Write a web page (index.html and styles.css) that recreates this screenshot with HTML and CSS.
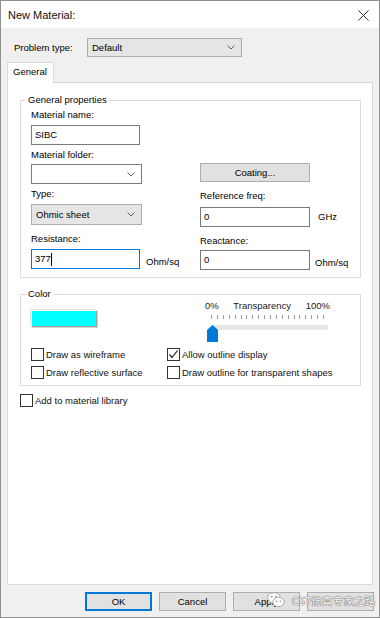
FILE: index.html
```html
<!DOCTYPE html>
<html lang="en">
<head>
  <meta charset="UTF-8">
  <meta name="viewport" content="width=device-width, initial-scale=1.0">
  <title>New Material</title>
  <link rel="stylesheet" href="styles.css">
</head>
<body>
  <div class="window">
    <div class="titlebar">
      <span class="title">New Material:</span>
      <svg class="close" width="11" height="11" viewBox="0 0 11 11"><path d="M0.5 0.5 L10.5 10.5 M10.5 0.5 L0.5 10.5" stroke="#2b2b2b" stroke-width="1"/></svg>
    </div>
    <div class="content">
      <div class="problem-row">
        <span class="problem-label">Problem type:</span>
        <div class="combo combo-list problem-select">
          <span>Default</span>
          <svg class="chev" width="8" height="5" viewBox="0 0 8 5"><path d="M0.5 0.5 L4 4 L7.5 0.5" fill="none" stroke="#606060"/></svg>
        </div>
      </div>

      <div class="tabs"><div class="tab">General</div></div>

      <div class="panel">
        <fieldset class="group general">
          <legend>General properties</legend>
          <div class="cols">
            <div class="col col-left">
              <div class="label">Material name:</div>
              <div class="edit name-edit">SIBC</div>
              <div class="label l2">Material folder:</div>
              <div class="combo combo-edit folder-select">
                <span></span>
                <svg class="chev" width="8" height="5" viewBox="0 0 8 5"><path d="M0.5 0.5 L4 4 L7.5 0.5" fill="none" stroke="#606060"/></svg>
              </div>
              <div class="label l3">Type:</div>
              <div class="combo combo-list type-select">
                <span>Ohmic sheet</span>
                <svg class="chev" width="8" height="5" viewBox="0 0 8 5"><path d="M0.5 0.5 L4 4 L7.5 0.5" fill="none" stroke="#606060"/></svg>
              </div>
              <div class="label l4">Resistance:</div>
              <div class="field-row">
                <div class="edit focus">377<span class="caret"></span></div>
                <span class="unit unit-left">Ohm/sq</span>
              </div>
            </div>
            <div class="col col-right">
              <div class="button coating">Coating...</div>
              <div class="label r2">Reference freq:</div>
              <div class="field-row r2-field">
                <div class="edit wide">0</div>
                <span class="unit unit-ghz">GHz</span>
              </div>
              <div class="label r3">Reactance:</div>
              <div class="field-row r3-field">
                <div class="edit wide">0</div>
                <span class="unit unit-ohm">Ohm/sq</span>
              </div>
            </div>
          </div>
        </fieldset>

        <fieldset class="group color">
          <legend>Color</legend>
          <div class="color-top">
            <div class="swatch-wrap"><div class="swatch"></div></div>
            <div class="transparency">
              <div class="trans-labels"><span>0%</span><span>Transparency</span><span>100%</span></div>
              <div class="ticks"></div>
              <div class="slider">
                <div class="track"></div>
                <svg class="thumb" width="11" height="17" viewBox="0 0 11 17"><path d="M0 5 L5.5 0 L11 5 L11 17 L0 17 Z" fill="#0078d7"/></svg>
              </div>
            </div>
          </div>
          <div class="checks">
            <div class="check"><span class="box"></span>Draw as wireframe</div>
            <div class="check"><span class="box checked"><svg width="11" height="11" viewBox="0 0 11 11"><path d="M1.5 5.5 L4 8.5 L9.5 1.5" fill="none" stroke="#222" stroke-width="1.2"/></svg></span>Allow outline display</div>
            <div class="check"><span class="box"></span>Draw reflective surface</div>
            <div class="check"><span class="box"></span>Draw outline for transparent shapes</div>
          </div>
        </fieldset>

        <div class="check library"><span class="box"></span>Add to material library</div>
      </div>

      <div class="buttons">
        <div class="button dlg default">OK</div>
        <div class="button dlg">Cancel</div>
        <div class="button dlg">Apply</div>
        <div class="button dlg"></div>
      </div>
    </div>

    <div class="watermark">
      <svg width="18" height="16" viewBox="0 0 18 16">
        <ellipse cx="7" cy="6" rx="6.3" ry="5.3" fill="#fff" stroke="#a8a8a8" stroke-width="1"/>
        <ellipse cx="11.5" cy="10" rx="5.6" ry="4.7" fill="#fff" stroke="#a8a8a8" stroke-width="1"/>
        <circle cx="4.8" cy="4.6" r="0.9" fill="#8a8a8a"/>
        <circle cx="8.8" cy="4.6" r="0.9" fill="#8a8a8a"/>
        <circle cx="9.6" cy="9.3" r="0.8" fill="#8a8a8a"/>
        <circle cx="13.4" cy="9.3" r="0.8" fill="#8a8a8a"/>
      </svg>
      <span>CST仿真专家之路</span>
    </div>
  </div>
</body>
</html>
```

FILE: styles.css
```css
body {
  margin: 0;
  font-family: "Liberation Sans", Arial, sans-serif;
  font-size: 9.5px;
  color: #000;
  background: #fff;
}
.window {
  position: relative;
  width: 380px;
  height: 618px;
  box-sizing: border-box;
  border: 1px solid #8f8f8f;
  display: flex;
  flex-direction: column;
  overflow: hidden;
}
.titlebar {
  height: 27px;
  background: #fff;
  display: flex;
  align-items: center;
  justify-content: space-between;
  padding: 0 10px 0 7px;
}
.title {
  font-size: 11px;
  color: #111;
}
.close {
  margin-top: 1px;
}
.content {
  flex: 1;
  background: #f0f0f0;
  padding: 10px 6px 0 6px;
}
.problem-row {
  display: flex;
  align-items: center;
  height: 19px;
  margin-left: 7px;
}
.problem-label {
  width: 73px;
}
.combo {
  box-sizing: border-box;
  display: flex;
  align-items: center;
  justify-content: space-between;
  padding: 0 6px 0 4px;
  border: 1px solid #adadad;
}
.combo-list {
  background: #e5e5e5;
}
.combo-edit {
  background: #fff;
  border-color: #7a7a7a;
}
.problem-select {
  width: 155px;
  height: 19px;
}
.tabs {
  margin-top: 5px;
  display: flex;
  position: relative;
  z-index: 1;
  margin-bottom: -1px;
}
.tab {
  width: 47px;
  height: 21px;
  box-sizing: border-box;
  border: 1px solid #d9d9d9;
  border-bottom: none;
  background: #fff;
  padding: 3px 0 0 5px;
}
.panel {
  height: 503px;
  box-sizing: border-box;
  border: 1px solid #d9d9d9;
  background: #fff;
  padding-top: 10px;
}
.group {
  margin: 0 11px 0 12px;
  border: 1px solid #dcdcdc;
  padding: 1px 10px 7px 10px;
  min-width: 0;
}
.group legend {
  line-height: 14px;
  padding: 0 2px;
  margin-left: -5px;
}
.cols {
  display: flex;
}
.col {
  display: flex;
  flex-direction: column;
  align-items: flex-start;
}
.col-left {
  width: 169px;
}
.label {
  line-height: 14px;
}
.edit {
  box-sizing: border-box;
  width: 109px;
  height: 20px;
  border: 1px solid #7a7a7a;
  background: #fff;
  padding-left: 3px;
  line-height: 18px;
  display: flex;
  align-items: center;
}
.edit.wide {
  width: 110px;
}
.edit.focus {
  border-color: #0078d7;
}
.caret {
  display: inline-block;
  width: 1px;
  height: 13px;
  background: #000;
}
.name-edit {
  margin-top: 3px;
}
.l2 {
  margin-top: 3px;
}
.folder-select {
  margin-top: 2px;
  width: 111px;
  height: 20px;
}
.l3 {
  margin-top: 3px;
}
.type-select {
  margin-top: 3px;
  width: 111px;
  height: 21px;
}
.l4 {
  margin-top: 7px;
}
.field-row {
  display: flex;
  align-items: center;
  margin-top: 3px;
}
.unit-left {
  margin-left: 6px;
  margin-top: 4px;
}
.unit-ghz {
  margin-left: 8px;
  margin-top: -2px;
}
.unit-ohm {
  margin-left: 5px;
  margin-top: 4px;
}
.button {
  box-sizing: border-box;
  background: #e1e1e1;
  border: 1px solid #adadad;
  display: flex;
  align-items: center;
  justify-content: center;
}
.coating {
  margin-top: 55px;
  width: 110px;
  height: 19px;
}
.r2 {
  margin-top: 7px;
}
.r2-field {
  margin-top: 4px;
}
.r3 {
  margin-top: 7px;
}
.r3-field {
  margin-top: 2px;
}
.color {
  margin-top: 9px;
  padding: 0 10px 6px 10px;
}
.color-top {
  display: flex;
  margin-top: -2px;
}
.swatch-wrap {
  width: 174px;
}
.swatch {
  margin-top: 11px;
  width: 66px;
  height: 17px;
  box-sizing: border-box;
  background: #00ffff;
  border: 1px solid;
  border-color: #ffffff #a0a0a0 #a0a0a0 #ffffff;
  box-shadow: 1px 1px 0 #d0d0d0, -1px -1px 0 #e3e3e3;
}
.transparency {
  width: 125px;
}
.trans-labels {
  display: flex;
  justify-content: space-between;
  line-height: 14px;
  color: #222;
}
.ticks {
  margin: 2px 0 0 6px;
  width: 113px;
  height: 4px;
  background: repeating-linear-gradient(to right, #a0a0a0 0, #a0a0a0 1px, transparent 1px, transparent 5.9px);
}
.slider {
  position: relative;
  height: 17px;
  margin-top: 1px;
}
.track {
  margin: 6px 0 0 6px;
  width: 117px;
  height: 5px;
  background: #e7e7e7;
}
.thumb {
  position: absolute;
  left: 2px;
  top: 0;
}
.checks {
  display: grid;
  grid-template-columns: 136px auto;
  row-gap: 5px;
  margin-top: 6px;
}
.check {
  display: flex;
  align-items: center;
  height: 13px;
  gap: 2px;
  color: #111;
}
.box {
  box-sizing: border-box;
  width: 13px;
  height: 13px;
  border: 1px solid #333;
  background: #fff;
  display: flex;
  align-items: center;
  justify-content: center;
  flex-shrink: 0;
}
.library {
  margin: 8px 0 0 12px;
}
.buttons {
  display: flex;
  justify-content: flex-end;
  gap: 7px;
  margin: 7px -1px 0 0;
}
.dlg {
  width: 67px;
  height: 19px;
}
.dlg.default {
  border-color: #0078d7;
  box-shadow: inset 0 0 0 1px #0078d7;
}
.watermark {
  position: absolute;
  left: 266px;
  top: 591px;
  display: flex;
  align-items: center;
  gap: 7px;
}
.watermark span {
  font-family: "Noto Sans CJK SC", "Liberation Sans", sans-serif;
  font-size: 10.5px;
  letter-spacing: 0.2px;
  color: #fff;
  text-shadow: 0 0 1px #666, 0 0 1px #666, 0 0 1px #666;
}
```
